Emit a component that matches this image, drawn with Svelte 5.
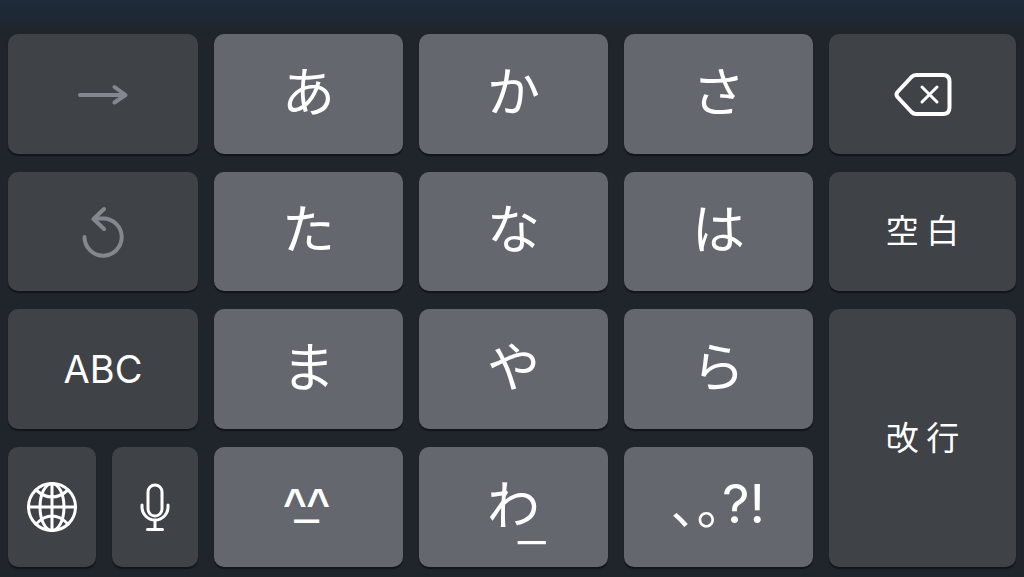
<script>
	const kanaRows = [
		['あ', 'か', 'さ'],
		['た', 'な', 'は'],
		['ま', 'や', 'ら']
	];
</script>

<main class="keyboard" lang="ja">
	<button type="button" class="key dark" aria-label="次の文字" disabled>
		<svg width="52" height="24" viewBox="0 0 52 24">
			<path d="M3 13H48M37.5 5L48.5 13L37.5 20.5" />
		</svg>
	</button>
	<button type="button" class="key dark" aria-label="元に戻す" disabled>
		<svg width="44" height="54" viewBox="0 0 44 54">
			<path d="M3.5 32A18.6 18.6 0 1 0 22 13.5H13M23 4L12.5 14L23 24" />
		</svg>
	</button>
	<button type="button" class="key dark abc">ABC</button>
	<div class="pair">
		<button type="button" class="key dark" aria-label="次のキーボード">
			<svg width="52" height="52" viewBox="0 0 52 52">
				<circle cx="26" cy="26" r="23.5" />
				<ellipse cx="26" cy="26" rx="12" ry="23.5" />
				<path d="M26 2.5V49.5M2.5 26H49.5M10 9Q26 23 42 9M10 43Q26 27 42 43" />
			</svg>
		</button>
		<button type="button" class="key dark" aria-label="音声入力">
			<svg width="32" height="50" viewBox="0 0 32 50">
				<rect x="9" y="3" width="14" height="31" rx="7" />
				<path d="M3 23V25A13 13 0 0 0 29 25V23M16 38V47M8.5 47.5H23.5" />
			</svg>
		</button>
	</div>

	<div class="letters">
		{#each kanaRows as row}
			{#each row as kana}
				<button type="button" class="key kana">{kana}</button>
			{/each}
		{/each}
		<button type="button" class="key face"><span>^^</span><span class="mouth">_</span></button>
		<button type="button" class="key kana"><span class="wa">わ<span class="bar">_</span></span></button>
		<button type="button" class="key marks"><span class="points">､｡</span>?!</button>
	</div>

	<button type="button" class="key dark" aria-label="削除">
		<svg width="60" height="46" viewBox="0 0 60 46">
			<path
				class="outline"
				d="M23 4H50Q56.5 4 56.5 10.5V36.5Q56.5 43 50 43H23Q20.5 43 18.5 41L4.5 26Q2.5 23.5 4.5 21L18.5 6Q20.5 4 23 4Z"
			/>
			<path d="M29 16L44 31M44 16L29 31" />
		</svg>
	</button>
	<button type="button" class="key dark space">空 白</button>
	<button type="button" class="key dark enter">改 行</button>
</main>

<style>
	:global(body) {
		margin: 0;
		background: #20242b;
	}

	.keyboard {
		display: grid;
		grid-template-columns: 190fr repeat(3, 189fr) 187fr;
		grid-template-rows: 120px 119px 120px 120px;
		grid-auto-flow: column;
		gap: 18px 16px;
		padding: 34px 8px 10px;
		background: linear-gradient(#1e2b38, #1e2935 16px, #20242b 30px);
		font-family: 'Noto Sans CJK JP', sans-serif;
	}

	.key {
		display: flex;
		align-items: center;
		justify-content: center;
		min-width: 0;
		margin: 0;
		padding: 0;
		border: 0;
		border-radius: 10px;
		background: #64676d;
		box-shadow: 0 2px 1px #12151a;
		color: #fff;
		font-family: inherit;
		font-weight: 400;
		line-height: 1;
	}

	.key:active {
		background: #7b7e84;
	}

	.dark {
		background: #3f4246;
	}

	.dark:disabled {
		color: #84878d;
	}

	.letters {
		display: grid;
		grid-column: 2 / 5;
		grid-row: 1 / 5;
		grid-template-columns: subgrid;
		grid-template-rows: subgrid;
	}

	.pair {
		display: grid;
		grid-template-columns: 89fr 86fr;
		gap: 16px;
	}

	.enter {
		grid-row: span 2;
	}

	.kana {
		padding-bottom: 10px;
		font-size: 53px;
	}

	.abc {
		font-family: Inter, sans-serif;
		font-size: 38px;
	}

	.space,
	.enter {
		padding-bottom: 4px;
		font-size: 33px;
	}

	.face {
		flex-direction: column;
		padding-bottom: 8px;
		padding-right: 4px;
		font-family: 'Liberation Sans', sans-serif;
		font-size: 40px;
		font-weight: 700;
	}

	.mouth {
		margin-top: -40px;
		-webkit-text-stroke: 2px #fff;
	}

	.wa {
		position: relative;
	}

	.bar {
		position: absolute;
		left: 30px;
		top: 12px;
	}

	.marks {
		padding-bottom: 6px;
		font-family: Inter, sans-serif;
		font-size: 54px;
		font-weight: 400;
	}

	.points {
		padding-bottom: 4px;
		font-family: 'Noto Sans CJK JP', sans-serif;
		font-size: 50px;
	}

	svg {
		fill: none;
		stroke: currentColor;
		stroke-width: 3;
		stroke-linecap: round;
		stroke-linejoin: round;
	}

	.outline,
	.key:disabled svg {
		stroke-width: 4;
	}
</style>
